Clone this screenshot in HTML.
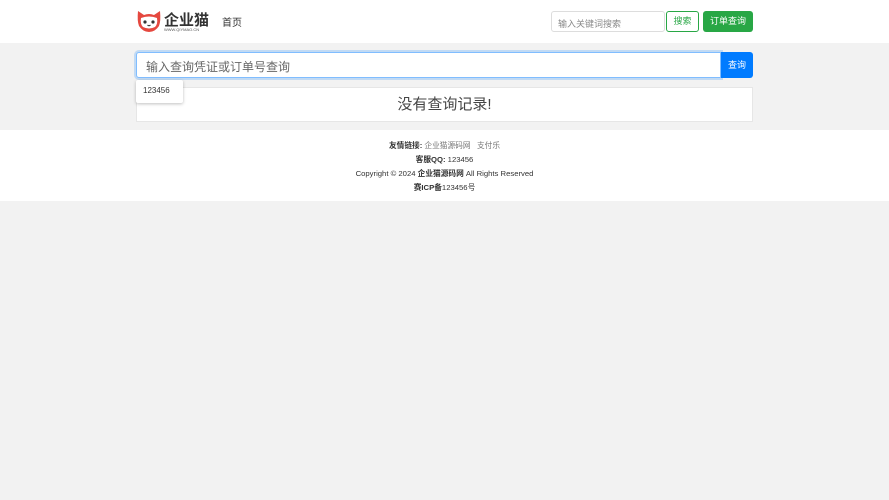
<!DOCTYPE html>
<html><head><meta charset="utf-8"><style>
*{box-sizing:border-box;margin:0;padding:0}
body{width:889px;height:500px;background:#f2f2f2;font-family:"Liberation Sans","Noto Sans CJK SC",sans-serif;position:relative;overflow:hidden;color:#333}
.hdr{position:absolute;left:0;top:0;width:889px;height:43px;background:#fff}
.ab{position:absolute}
.foot{position:absolute;left:0;top:130px;width:889px;height:71px;background:#fff;font-size:7.7px;color:#333;text-align:center}
.foot div{position:absolute;left:0;width:889px}
.foot span.l{color:#777}
</style></head><body>
<div class="hdr">
  <svg class="ab" style="left:136px;top:9px" width="26" height="24" viewBox="0 0 26 24">
    <path d="M2 2 L8 6 Q13 4 18 6 L24 2 Q25 12 23 17 Q19 23 13 23 Q7 23 3 17 Q1 12 2 2Z" fill="#e5483f"/>
    <path d="M5 9 Q13 6 21 9 Q22 15 19 18 Q13 21 7 18 Q4 15 5 9Z" fill="#fff"/>
    <circle cx="9" cy="13" r="1.6" fill="#333"/><circle cx="17" cy="13" r="1.6" fill="#333"/>
    <path d="M11.5 16 Q13 17.5 14.5 16" stroke="#333" fill="none" stroke-width="1"/>
  </svg>
  <div class="ab" style="left:164px;top:9px;font-size:15px;font-weight:bold;color:#333">企业猫</div>
  <div class="ab" style="left:164px;top:27px;font-size:4px;color:#555">WWW.QIYMAO.CN</div>
  <div class="ab" style="left:222px;top:14px;font-size:10px;color:#333">首页</div>
  <div class="ab" style="left:551px;top:11px;width:114px;height:21px;border:1px solid #ddd;border-radius:3px;font-size:9px;color:#888;padding:5px 6px">输入关键词搜索</div>
  <div class="ab" style="left:666px;top:11px;width:33px;height:21px;border:1px solid #28a745;border-radius:3px;font-size:9px;color:#28a745;text-align:center;line-height:19px">搜索</div>
  <div class="ab" style="left:703px;top:11px;width:50px;height:21px;background:#28a745;border-radius:3px;font-size:9px;color:#fff;text-align:center;line-height:21px">订单查询</div>
</div>
<div class="ab" style="left:136px;top:52px;width:585px;height:26px;background:#fff;border:1px solid #80bdff;box-shadow:0 0 0 2px rgba(0,123,255,.2);border-radius:3px 0 0 3px;font-size:12px;color:#666;padding:5px 9px">输入查询凭证或订单号查询</div>
<div class="ab" style="left:721px;top:52px;width:32px;height:26px;background:#007bff;border-radius:0 3px 3px 0;color:#fff;font-size:9px;text-align:center;line-height:26px">查询</div>
<div class="ab" style="left:136px;top:87px;width:617px;height:35px;background:#fff;border:1px solid #e6e6e6;font-size:15px;color:#444;text-align:center;line-height:34px">没有查询记录!</div>
<div class="ab" style="left:136px;top:80px;width:47px;height:23px;background:#fff;box-shadow:0 1px 3px rgba(0,0,0,.25);border-radius:2px;font-size:8px;color:#333;padding:6px 7px">123456</div>
<div class="foot">
  <div style="top:10px"><b>友情链接:</b> <span class="l">企业猫源码网 &nbsp; 支付乐</span></div>
  <div style="top:24px"><b>客服QQ:</b> 123456</div>
  <div style="top:38px">Copyright © 2024 <b>企业猫源码网</b> All Rights Reserved</div>
  <div style="top:52px"><b>赛ICP备</b>123456号</div>
</div>
</body></html>
